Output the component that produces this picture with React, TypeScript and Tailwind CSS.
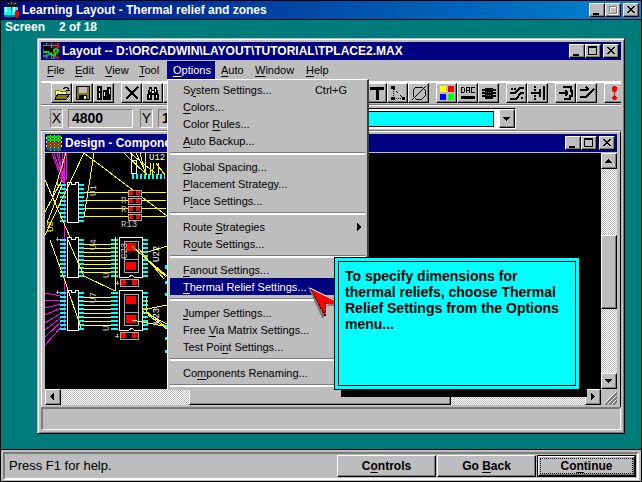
import type { ReactNode } from "react";
import clsx from "clsx";

const RAISED =
  "bg-[#bdbdbd] border border-t-white border-l-white border-r-black border-b-black shadow-[inset_-1px_-1px_0_#7b7b7b]";
const DITHER = "bg-[repeating-conic-gradient(#ffffff_0_25%,#bdbdbd_0_50%)] bg-[length:2px_2px]";

// "&" marks the underlined access key
function Mnemonic({ text }: { text: string }) {
  const i = text.indexOf("&");
  if (i < 0) return <>{text}</>;
  return (
    <>
      {text.slice(0, i)}
      <span className="underline underline-offset-2">{text[i + 1]}</span>
      {text.slice(i + 2)}
    </>
  );
}

function Glyph({ size = 16, className, children }: { size?: number; className?: string; children: ReactNode }) {
  return (
    <svg
      width={size}
      height={size}
      viewBox={`0 0 ${size} ${size}`}
      shapeRendering="crispEdges"
      className={clsx("shrink-0", className)}
      aria-hidden="true"
    >
      {children}
    </svg>
  );
}

function WindowButtons({ maxDisabled }: { maxDisabled?: boolean }) {
  const button = clsx(RAISED, "flex h-[14px] w-4 items-center justify-center");
  return (
    <div className="flex shrink-0 items-center pr-0.5">
      <button className={button} aria-label="Minimize">
        <Glyph size={10}>
          <path d="M1 8h6v2H1z" />
        </Glyph>
      </button>
      <button className={button} aria-label="Maximize">
        <Glyph size={10}>
          {maxDisabled ? (
            <>
              <path d="M2 2h7v7H2z" fill="none" stroke="#fff" strokeWidth="2" />
              <path d="M1.500 1.500h7v7h-7z" fill="none" stroke="#7b7b7b" />
            </>
          ) : (
            <path d="M0 0h9v9H0zM1 2v6h7V2z" fillRule="evenodd" />
          )}
        </Glyph>
      </button>
      <button className={clsx(button, "ml-0.5")} aria-label="Close">
        <Glyph size={10}>
          <path d="M1 1h2v1h1v1h2V2h1V1h2v1H8v1H7v1H6v1h1v1h1v1h1v1H7V7H6V6H4v1H3v1H1V7h1V6h1V5h1V4H3V3H2V2H1z" />
        </Glyph>
      </button>
    </div>
  );
}

function LearningIcon() {
  return (
    <Glyph size={18}>
      <path d="M3 1h12v3H3z" fill="#222" />
      <path d="M5 2h1v1H5zM8 1h1v2H8zM11 2h2v1h-2z" fill="#888" />
      <path d="M1 6h7v8H1zM9 6h6v8H9z" fill="#00ffff" />
      <path d="M2 4h6v2H2zM9 4h6v2H9z" fill="#111" />
      <path d="M2 6h2v5H2zM10 6h2v5h-2z" fill="#fff" />
      <path d="M1 14h14v2H1zM8 6h1v9H8z" fill="#008080" />
      <path d="M12 10h4v5h-4zM13 9h2v8h-2z" fill="#f00000" />
    </Glyph>
  );
}

function LayoutIcon() {
  return (
    <Glyph>
      <path d="M0 0h16v16H0z" fill="#222" />
      <path d="M0 2h16M0 6h16M3 0v16M8 0v16" stroke="#777" />
      <path d="M1 3h6v2h3v4H5v2H2V8H1z" />
      <path d="M15 0v4l-4 4v4l5 4" fill="none" stroke="#f00" strokeWidth="2" />
      <path d="M0 9h5l4 3h4" fill="none" stroke="#00e000" strokeWidth="2" />
      <circle cx="13" cy="8" r="2" fill="none" stroke="#00e000" strokeWidth="1.500" />
      <path d="M0 13h4l2-2M10 16l2-3" fill="none" stroke="#4060ff" strokeWidth="2" />
    </Glyph>
  );
}

function BoardIcon() {
  return (
    <Glyph>
      <path d="M1 0h14v16H1z" fill="#063" />
      <path d="M1 2h14M1 5h14" stroke="#00e000" strokeWidth="2" />
      <path d="M1 8h14M1 11h14" stroke="#e02020" strokeWidth="2" strokeDasharray="3 1" />
      <path d="M1 13h14" stroke="#4050ff" strokeDasharray="2 1" />
      <path d="M0 3h1M0 7h1M0 11h1M15 3h1M15 7h1M15 11h1" stroke="#ff0" strokeWidth="2" />
      <path d="M4 0v16M8 0v16M12 0v16" stroke="#dd0" strokeDasharray="1 2" />
    </Glyph>
  );
}

type Tool = { label: string; icon?: ReactNode };

const TOOL_GROUPS: Tool[][] = [
  [
    {
      label: "Open",
      icon: (
        <>
          <path d="M1 5h4l1 1h6v8H1z" fill="#ffff80" stroke="#7b7b00" />
          <path d="M4 9h12l-4 5H1z" fill="#808000" stroke="#000" />
          <path d="M9 3h1V2h3v1h1v2M12 5h4M14 3v2" fill="none" stroke="#000" />
        </>
      ),
    },
    {
      label: "Save",
      icon: (
        <>
          <path d="M1 1h14v14H1z" />
          <path d="M2 2h12v12H2z" fill="#808000" />
          <path d="M4 2h8v6H4z" fill="#bdbdbd" />
          <path d="M4 10h8v5H4z" />
          <path d="M9 11h2v3H9z" fill="#fff" />
        </>
      ),
    },
    {
      label: "Library manager",
      icon: (
        <>
          <path d="M1 1h5v14H1zM7 5h4v10H7zM11 2h4v13h-4z" />
          <path d="M3 3h1v3H3zM3 8h1v5H3zM8 7h1v4H8zM13 4h1v5h-1z" fill="#fff" />
        </>
      ),
    },
  ],
  [
    { label: "Delete", icon: <path d="M2 2l12 12M14 2L2 14" stroke="#000" strokeWidth="2" /> },
    {
      label: "Find",
      icon: (
        <>
          <path d="M4 2h3v3h2V2h3v3h1v4h1v6H9v-5H7v5H2V9h1V5h1z" />
          <path d="M4 10h1v3H4zM11 10h1v3h-1zM5 4h1v3H5zM10 4h1v3h-1zM7 6h2v2H7z" fill="#fff" />
        </>
      ),
    },
    { label: "Edit" },
    { label: "Spreadsheet" },
  ],
  [
    { label: "Zoom in" },
    { label: "Zoom out" },
    { label: "Zoom all" },
    { label: "Query" },
    { label: "Component" },
  ],
  [
    { label: "Pin" },
    { label: "Obstacle" },
    { label: "Text", icon: <path d="M1 2h14v3h-5v10H7V5H1z" /> },
    {
      label: "Connection",
      icon: (
        <>
          <path d="M3 4v9M3 3l10 10M4 13h9" fill="none" stroke="#000" strokeDasharray="1 1" />
          <path d="M1 1h4v3H1zM1 12h4v3H1zM12 12h3v3h-3z" />
        </>
      ),
    },
    {
      label: "Error",
      icon: (
        <path d="M5 2h6l3 3v6l-3 3H5l-3-3V5zM1 15L15 1" fill="none" stroke="#000" />
      ),
    },
  ],
  [
    {
      label: "Color",
      icon: (
        <>
          <path d="M1 1h6v6H1z" fill="#ff0" />
          <path d="M9 1h6v6H9z" fill="#f00" />
          <path d="M1 9h6v6H1z" fill="#00f" />
          <path d="M9 9h6v6H9z" fill="#0f0" />
        </>
      ),
    },
    {
      label: "Online DRC",
      icon: (
        <>
          <path
            d="M1.500 2.500h2l1 1v3l-1 1h-2zM6.500 8V2.500h3v3h-3M9.500 5.500v2.500M15 2.500h-3.500v5H15"
            fill="none"
            stroke="#000"
          />
          <path d="M1 11h14v3H1z" />
        </>
      ),
    },
    {
      label: "Reconnect",
      icon: (
        <>
          <path d="M4 3h8v11H4z" />
          <path d="M1 5h14M1 8h14M1 11h14" stroke="#000" strokeWidth="2" />
          <path d="M5 7h6M5 10h6" stroke="#7b7b7b" strokeDasharray="1 1" />
        </>
      ),
    },
  ],
  [
    {
      label: "Auto path route",
      icon: (
        <>
          <path d="M1 8h5l5-5h4M1 14h6l5-6h3" fill="none" stroke="#000" strokeWidth="2" />
          <path d="M2 4h5M12 13h3" stroke="#000" strokeWidth="2" strokeDasharray="2 1" />
        </>
      ),
    },
    {
      label: "Shove track",
      icon: (
        <>
          <path d="M13 1h2v14h-2zM1 7h10v2H1zM9 4h2v8H9z" />
          <path d="M5 1v5M5 10v5" stroke="#000" strokeWidth="2" strokeDasharray="2 1" />
        </>
      ),
    },
  ],
  [
    {
      label: "Edit segment",
      icon: (
        <path d="M5 1h9v4h1v7h-2v3H6v-2h5v-3h2V7h-1V3H5zM1 7h6V5h2v1h1v4H9v1H7V9H1z" />
      ),
    },
    {
      label: "Add route",
      icon: (
        <path d="M1 5h8M7 2l3 3M1 12h6l8-8" fill="none" stroke="#000" strokeWidth="2" />
      ),
    },
  ],
  [
    {
      label: "Refresh",
      icon: <path d="M6 1h3v1h1v4H9v1H8v4h1v1h1v2H9v1H6v-1H5v-2h1v-1h1V7H6V6H5V2h1z" fill="#f00" />,
    },
  ],
];

type MenuEntry = { text: string; shortcut?: string; sub?: boolean; active?: boolean };

const OPTIONS_MENU: MenuEntry[][] = [
  [
    { text: "S&ystem Settings...", shortcut: "Ctrl+G" },
    { text: "&Colors..." },
    { text: "Color &Rules..." },
    { text: "&Auto Backup..." },
  ],
  [{ text: "&Global Spacing..." }, { text: "&Placement Strategy..." }, { text: "P&lace Settings..." }],
  [{ text: "Route &Strategies", sub: true }, { text: "R&oute Settings..." }],
  [{ text: "&Fanout Settings..." }, { text: "&Thermal Relief Settings...", active: true }],
  [{ text: "&Jumper Settings..." }, { text: "Free &Via Matrix Settings..." }, { text: "Test Poi&nt Settings..." }],
  [{ text: "Co&mponents Renaming..." }],
];

function OptionsMenu() {
  return (
    <div
      role="menu"
      className="absolute top-full left-0 z-10 w-[202px] border-t border-l border-r-2 border-t-white border-l-white border-r-[#404040] bg-[#bdbdbd] px-0.5 pt-px"
    >
      {OPTIONS_MENU.map((group, g) => (
        <div key={g}>
          {group.map((item) => (
            <button
              key={item.text}
              role="menuitem"
              className={clsx(
                "flex h-[17px] w-full items-center pr-[18px] pl-[13px]",
                item.active && "bg-[#000080] text-white"
              )}
            >
              <span className="flex-1 text-left">
                <Mnemonic text={item.text} />
              </span>
              {item.shortcut && <span>{item.shortcut}</span>}
              {item.sub && (
                <Glyph size={8} className="-mr-4">
                  <path d="M2 0h1v1h1v1h1v1h1v2H5v1H4v1H3v1H2z" />
                </Glyph>
              )}
            </button>
          ))}
          <div className="my-[3px] h-[3px] border-t border-b-2 border-t-[#7b7b7b] border-b-white" />
        </div>
      ))}
    </div>
  );
}

const MENUS = [
  { name: "&File", width: "w-7" },
  { name: "&Edit", width: "w-[30px]" },
  { name: "&View", width: "w-[34px]" },
  { name: "&Tool", width: "w-[34px]" },
  { name: "&Options", width: "w-12", open: true },
  { name: "&Auto", width: "w-[34px]" },
  { name: "&Window", width: "w-[51px]" },
  { name: "&Help", width: "w-9" },
];

function MenuBar() {
  return (
    <nav className="flex h-[21px] shrink-0 items-start pt-px text-[11px] leading-4">
      {MENUS.map(({ name, width, open }) => (
        <div key={name} className={clsx("relative", width)}>
          <button className={clsx("h-[18px] w-full pl-[6px] text-left", open && "bg-[#000080] text-white")}>
            <Mnemonic text={name} />
          </button>
          {open && <OptionsMenu />}
        </div>
      ))}
    </nav>
  );
}

function Toolbar() {
  return (
    <div className="flex h-6 shrink-0 gap-[7px] overflow-hidden border-t-2 border-b border-t-white border-b-[#7b7b7b] pl-[10px]">
      {TOOL_GROUPS.map((group, i) => (
        <div key={i} className="flex shrink-0">
          {group.map((tool) => (
            <button
              key={tool.label}
              aria-label={tool.label}
              className={clsx(RAISED, "flex h-5 w-[21px] items-center justify-center")}
            >
              {tool.icon && <Glyph>{tool.icon}</Glyph>}
            </button>
          ))}
        </div>
      ))}
    </div>
  );
}

function Coordinate({ axis, value }: { axis: string; value: string }) {
  const sunken = "h-[19px] border border-t-[#7b7b7b] border-l-[#7b7b7b] border-r-white border-b-white";
  return (
    <div className="flex shrink-0 gap-[5px]">
      <label htmlFor={`pos-${axis}`} className={clsx(sunken, "w-[13px] text-center leading-[17px]")}>
        {axis}
      </label>
      <input
        id={`pos-${axis}`}
        defaultValue={value}
        className={clsx(sunken, "w-[65px] pl-[3px] font-bold outline-none")}
      />
    </div>
  );
}

function PositionBar() {
  return (
    <div className="flex h-[26px] shrink-0 items-center gap-[7px] border-t border-b border-t-white border-b-[#7b7b7b] pl-[9px] text-[14px]">
      <Coordinate axis="X" value="4800" />
      <Coordinate axis="Y" value="1" />
      <div className="ml-10 flex h-[21px] w-[246px] items-center border-t border-r border-t-black border-r-white bg-white">
        <select
          aria-label="Layer"
          className="mr-[5px] h-4 min-w-0 flex-1 appearance-none border border-black bg-[#00ffff]"
        />
        <button aria-label="Show layers" className={clsx(RAISED, "flex h-[19px] w-4 items-center justify-center")}>
          <Glyph size={8}>
            <path d="M0 2h7v1H6v1H5v1H4v1H3V5H2V4H1V3H0z" />
          </Glyph>
        </button>
      </div>
    </div>
  );
}

function Chip({ y, n }: { y: number; n: number }) {
  const rows = Array.from({ length: n }, (_, i) => y + 3 + i * 4);
  return (
    <g>
      {rows.map((r) => (
        <path key={r} d={`M60 ${r}h6M78 ${r}h6`} stroke="#00ffff" strokeWidth="2" />
      ))}
      <path d={`M67 ${y}h4v2h4v-2h3v${n * 4}h-11z`} fill="none" stroke="#fff" />
      <path d={`M56 ${y + 2}h4M57 ${y}v4`} stroke="#aaa" />
    </g>
  );
}

function Module({ y }: { y: number }) {
  const rows = Array.from({ length: 10 }, (_, i) => y + 3 + i * 4);
  return (
    <g>
      {rows.map((r) => (
        <path key={r} d={`M111 ${r}h7M142 ${r}h6`} stroke="#00ffff" strokeWidth="2" />
      ))}
      {rows.slice(1, 9).map((r) => (
        <path key={r} d={`M84 ${r}h27`} stroke="#ffff00" />
      ))}
      <path d={`M119 ${y}h23v40h-8l-2-2l-3 2h-10z`} fill="none" stroke="#fff" />
      <path d={`M124 ${y + 4}h14v31h-14zM124 ${y + 22}h14`} fill="none" stroke="#aaa" />
      <path d={`M126 ${y + 6}h10v8h-10zM126 ${y + 25}h10v8h-10z`} fill="#ff0000" />
      <rect x="120" y={y + 42} width="18" height="7" fill="none" stroke="#aaa" />
      <path d={`M121 ${y + 43}h5v5h-5zM132 ${y + 43}h5v5h-5z`} fill="#ff0000" />
      <path d={`M115 ${y + 46}h4M117 ${y + 44}v4`} stroke="#aaa" />
    </g>
  );
}

function Board() {
  return (
    <svg width="124" height="237" viewBox="45 153 124 237" shapeRendering="crispEdges" aria-label="Board">
      <g stroke="#ff00ff" fill="none">
        <path d="M52 153l11 30M54 153l9 26M57 153l7 29M59 153l5 30M62 153l2 30M64 153l1 30M67 153l-1 28" />
        <path d="M64 178v152" />
        <path d="M45 293l16 3M45 300h16M45 308l16-4M45 315l16-7M45 323l18-11M45 330l18-14M45 337l18-17M45 345l18-20" />
      </g>
      <Chip y={182} n={10} />
      <Chip y={237} n={10} />
      <Chip y={290} n={10} />
      <Module y={237} />
      <Module y={290} />
      <path d="M131 153v20h5v-4M131 160h5v10" fill="none" stroke="#fff" />
      <path d="M132 176h33" stroke="#00ffff" strokeWidth="5" strokeDasharray="2 2" />
      <g stroke="#ffff00" fill="none">
        <path d="M84 192h82M84 200h82M84 208h82M84 216h82" />
        <path d="M84 153l83 63M94 153l-10 64M84 153l-39 82M62 185l-15 38M45 180l25 57M66 153l-14 45M45 212l17-32" />
        <path d="M124 153l23 22M136 153l11 22M140 153l5 20M145 153v22M150 163v12M154 163l-2 12M158 163v12M130 153l25 20M156 163l9 12" />
        <path d="M50 240l14 38l17 50M68 240l16 36l31 15M115 237v54M132 246l34 31M142 255l25 21M148 252l19-6M139 249l25 30" />
        <path d="M142 310l25-5M146 297v14l20 16M132 320l36 7M148 315l19 14M142 311l25 13" />
      </g>
      {[193, 201, 209, 217].map((y) => (
        <g key={y}>
          <rect x="128" y={y - 3} width="13" height="6" fill="#000" stroke="#aaa" />
          <path d={`M129 ${y - 2}h4v4h-4zM136 ${y - 2}h4v4h-4z`} fill="#ff0000" />
        </g>
      ))}
      <path d="M166 265v4M166 281v3M166 293v3M166 325v3M166 337v3M166 350v3" stroke="#00ffff" strokeWidth="2" />
      <g fill="#c8c8c8" fontFamily="Liberation Mono, monospace" fontSize="9">
        <text x="121" y="203">R</text>
        <text x="121" y="212">R</text>
        <text x="121" y="227">R13</text>
        <text x="149" y="160" fill="#fff">U12</text>
        <text transform="translate(96 196) rotate(-90)">U1</text>
        <text transform="translate(96 250) rotate(-90)">U4</text>
        <text transform="translate(96 303) rotate(-90)">U7</text>
        <text transform="translate(109 278) rotate(-90)">U</text>
        <text transform="translate(109 331) rotate(-90)">U</text>
        <text transform="translate(159 262) rotate(-90)" fill="#fff">U22</text>
        <text transform="translate(159 324) rotate(-90)" fill="#fff">U23</text>
        <text transform="translate(127 259) rotate(-90)">C23</text>
        <text transform="translate(53 232) rotate(-90)" fill="#ffff00">U3</text>
      </g>
    </svg>
  );
}

const ARROWS = {
  up: "M3 2h1v1h1v1h1v1h1v1H0V5h1V4h1V3h1z",
  down: "M0 2h7v1H6v1H5v1H4v1H3V5H2V4H1V3H0z",
  left: "M5 0v7H4V6H3V5H2V4H1V3h1V2h1V1h1V0z",
  right: "M2 0h1v1h1v1h1v1h1v1H5v1H4v1H3v1H2z",
};

function ScrollButton({ dir }: { dir: keyof typeof ARROWS }) {
  return (
    <button
      aria-label={`Scroll ${dir}`}
      className={clsx(RAISED, "flex size-4 shrink-0 items-center justify-center")}
    >
      <Glyph size={8}>
        <path d={ARROWS[dir]} />
      </Glyph>
    </button>
  );
}

function DesignWindow() {
  return (
    <section className="flex min-h-0 min-w-0 flex-1 flex-col border-t border-r border-l border-t-white border-r-black border-l-white px-[3px] pt-0.5 pb-0.5">
      <header className="flex h-[19px] shrink-0 items-center border-b border-[#bdbdbd] bg-[#000080] pl-px text-white">
        <BoardIcon />
        <h2 className="flex-1 pl-[3px] text-[12px] leading-4 font-bold whitespace-nowrap">Design - Component</h2>
        <WindowButtons />
      </header>
      <div className="flex min-h-0 flex-1">
        <div className="min-w-0 flex-1 overflow-hidden bg-black">
          <Board />
        </div>
        <div className={clsx(DITHER, "flex w-4 flex-col")}>
          <ScrollButton dir="up" />
          <div className="flex-[67]" />
          <div className={clsx(RAISED, "flex-[73]")} />
          <div className="flex-[65]" />
          <ScrollButton dir="down" />
        </div>
      </div>
      <div className="flex h-4 shrink-0">
        <div className={clsx(DITHER, "flex flex-1")}>
          <ScrollButton dir="left" />
          <div className="flex-[128]" />
          <div className={clsx(RAISED, "flex-[261]")} />
          <div className="flex-[135]" />
          <ScrollButton dir="right" />
        </div>
        <Glyph>
          <path d="M4 16L16 4M8 16l8-8M12 16l4-4" stroke="#7b7b7b" strokeWidth="2" />
          <path d="M3 15L15 3M7 15l8-8M11 15l4-4" stroke="#fff" />
        </Glyph>
      </div>
    </section>
  );
}

function LayoutWindow() {
  return (
    <section className="flex min-h-0 min-w-0 flex-1 flex-col border border-t-[#bdbdbd] border-r-black border-b-black border-l-[#bdbdbd] bg-[#bdbdbd] shadow-[inset_1px_1px_0_#fff,inset_-1px_-1px_0_#7b7b7b]">
      <div className="flex min-h-0 flex-1 flex-col p-[3px]">
        <header className="flex h-[18px] shrink-0 items-center bg-[#000080] pl-[2px] text-white">
          <LayoutIcon />
          <h1 className="flex-1 pl-[3px] text-[12px] leading-4 font-bold whitespace-nowrap">
            Layout -- D:\ORCADWIN\LAYOUT\TUTORIAL\TPLACE2.MAX
          </h1>
          <WindowButtons />
        </header>
        <MenuBar />
        <Toolbar />
        <PositionBar />
        <DesignWindow />
        <div className="h-[23px] shrink-0 border-t-2 border-r border-b border-l-2 border-t-[#7b7b7b] border-r-white border-b-white border-l-[#7b7b7b]" />
      </div>
    </section>
  );
}

function Callout() {
  return (
    <>
      <svg
        className="absolute top-[285px] left-[307px] z-20"
        width="30"
        height="34"
        viewBox="308 286 30 34"
        aria-hidden="true"
      >
        <path d="M308 287l4 2 12 16v13h-2z" fill="#7b7b7b" />
        <path d="M330 303h8v3h-12z" fill="#7b7b7b" />
        <path d="M310 288l28 13v3h-12l-1 13z" fill="#f00" />
        <path d="M325.500 302v14M311 289l14 27" fill="none" stroke="#000" strokeDasharray="3 1" />
        <path d="M310 288l28 14" stroke="#fff" />
      </svg>
      <aside className="absolute top-[256px] left-[333px] z-20 h-[133px] w-[246px] border border-black bg-[#00ffff] p-[3px] shadow-[7px_7px_0_#000]">
        <p className="h-full border border-black px-[6px] pt-[6px] text-[14px] leading-4 font-bold whitespace-nowrap">
          To specify dimensions for
          <br />
          thermal reliefs, choose Thermal
          <br />
          Relief Settings from the Options
          <br />
          menu...
        </p>
      </aside>
    </>
  );
}

function BottomBar() {
  const button = clsx(RAISED, "h-[22px] w-[99px]");
  return (
    <footer className="border-t border-black bg-[#bdbdbd] px-0.5 pt-0.5 pb-px">
      <div className="flex h-7 items-center border-2 border-t-[#7b7b7b] border-r-white border-b-white border-l-[#7b7b7b] pr-px pl-1">
        <p className="flex-1 text-[13px]">Press F1 for help.</p>
        <div className="flex gap-px text-[12px] font-bold">
          <button className={button}>
            <Mnemonic text="C&ontrols" />
          </button>
          <button className={button}>
            <Mnemonic text="Go &Back" />
          </button>
          <button className="h-[22px] w-[99px] border border-black bg-black">
            <span className={clsx(RAISED, "flex h-5 p-px")}>
              <span className="flex flex-1 items-center justify-center border border-dotted border-black">
                <span>
                  <Mnemonic text="Co&ntinue" />
                </span>
              </span>
            </span>
          </button>
        </div>
      </div>
    </footer>
  );
}

export default function App() {
  return (
    <main className="relative flex h-screen min-h-[482px] flex-col overflow-hidden border border-black bg-[#007b7b] font-['Liberation_Sans',Arial,sans-serif] text-black">
      <header className="flex h-[19px] shrink-0 items-center border-b border-black bg-linear-to-r from-[#000080] to-[#1084d0] pl-[2px] text-white">
        <LearningIcon />
        <h1 className="flex-1 pl-px text-[12px] leading-4 font-bold">Learning Layout - Thermal relief and zones</h1>
        <WindowButtons maxDisabled />
      </header>
      <p className="flex h-[18px] shrink-0 gap-[14px] pl-1 text-[12px] leading-[14px] font-bold text-white">
        <span>Screen</span>
        <span>2 of 18</span>
      </p>
      <div className="mr-4 mb-[15px] ml-9 flex min-h-0 flex-1">
        <LayoutWindow />
      </div>
      <Callout />
      <BottomBar />
    </main>
  );
}
